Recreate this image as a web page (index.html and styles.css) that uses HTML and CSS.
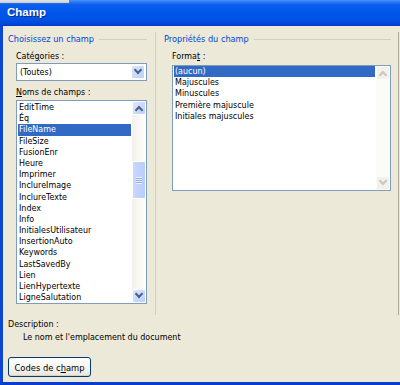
FILE: index.html
```html
<!DOCTYPE html>
<html lang="fr">
<head>
    <meta charset="UTF-8">
    <title>Champ</title>
    <link rel="stylesheet" href="styles.css">
</head>
<body>
    <div class="window">
        <div class="titlebar">Champ</div>
        <div class="frame">
            <div class="groups">
                <section class="group left">
                    <div class="group-title">Choisissez un champ</div>
                    <div class="label">Caté<u>g</u>ories :</div>
                    <div class="combo">
                        <span class="combo-text">(Toutes)</span>
                        <span class="sb-btn"><span class="arrow down"></span></span>
                    </div>
                    <div class="label"><u>N</u>oms de champs :</div>
                    <div class="listbox names">
                        <ul class="items">
                            <li>EditTime</li>
                            <li>Éq</li>
                            <li class="selected">FileName</li>
                            <li>FileSize</li>
                            <li>FusionEnr</li>
                            <li>Heure</li>
                            <li>Imprimer</li>
                            <li>InclureImage</li>
                            <li>InclureTexte</li>
                            <li>Index</li>
                            <li>Info</li>
                            <li>InitialesUtilisateur</li>
                            <li>InsertionAuto</li>
                            <li>Keywords</li>
                            <li>LastSavedBy</li>
                            <li>Lien</li>
                            <li>LienHypertexte</li>
                            <li>LigneSalutation</li>
                        </ul>
                        <div class="scrollbar">
                            <span class="sb-btn"><span class="arrow up"></span></span>
                            <div class="track">
                                <span class="thumb"><span class="grip"></span></span>
                            </div>
                            <span class="sb-btn"><span class="arrow down"></span></span>
                        </div>
                    </div>
                </section>
                <section class="group right">
                    <div class="group-title">Propriétés du champ</div>
                    <div class="label">Forma<u>t</u> :</div>
                    <div class="listbox formats">
                        <ul class="items">
                            <li class="selected">(aucun)</li>
                            <li>Majuscules</li>
                            <li>Minuscules</li>
                            <li>Première majuscule</li>
                            <li>Initiales majuscules</li>
                        </ul>
                        <div class="scrollbar disabled">
                            <span class="sb-btn"><span class="arrow up"></span></span>
                            <div class="track"></div>
                            <span class="sb-btn"><span class="arrow down"></span></span>
                        </div>
                    </div>
                </section>
            </div>
            <div class="description">
                <div class="desc-label">Description :</div>
                <div class="desc-text">Le nom et l'emplacement du document</div>
            </div>
            <button class="xp-button">Codes de c<u>h</u>amp</button>
        </div>
    </div>
</body>
</html>
```

FILE: styles.css
```css
body {
    margin: 0;
    background: #ece9d8;
    font-family: "DejaVu Sans Condensed", "DejaVu Sans", sans-serif;
    font-stretch: condensed;
    font-size: 8.9px;
    color: #000;
}
.window {
    width: 400px;
    height: 385px;
    display: flex;
    flex-direction: column;
    overflow: hidden;
}
.titlebar {
    position: relative;
    height: 26px;
    flex: none;
    box-sizing: border-box;
    padding: 6px 0 0 7px;
    background: linear-gradient(#4a95fa 0, #2a78f3 2px, #0b5eee 5px, #0057ea 12px, #0052e4 20px, #0046d6 24px, #0039c4 26px);
    color: #fff;
    font-family: "Liberation Sans", Arial, sans-serif;
    font-stretch: normal;
    font-weight: bold;
    font-size: 11.5px;
    text-shadow: 1px 1px 0 #0a2a8a;
}
/* bit of the window behind, showing over the top-left corner */
.titlebar::before {
    content: "";
    position: absolute;
    left: 0;
    top: 0;
    width: 69px;
    height: 3px;
    background: linear-gradient(#e4e3df, #c9ccd6);
}
.frame {
    flex: 1;
    display: flex;
    flex-direction: column;
    border-left: 3px solid #0a45d4;
    border-bottom: 3px solid #0a3ccd;
    background: #ece9d8;
}
.groups {
    display: flex;
    margin-top: 6px;
    height: 283px;
}
.group {
    display: flex;
    flex-direction: column;
    box-sizing: border-box;
}
.group.left {
    width: 153px;
    padding: 0 8px 0 13px;
    border-right: 1px solid #d0d0bf;
}
.group.right {
    flex: 1;
    padding: 0 7px 0 16px;
    border-right: 1px solid #aca899;
    margin-right: 1px;
}
.group-title {
    display: flex;
    align-items: center;
    height: 13px;
    margin-left: -8px;
    color: #0046d5;
    font-size: 9.1px;
    white-space: nowrap;
}
.group-title::after {
    content: "";
    flex: 1;
    height: 1px;
    background: #d0d0bf;
    margin: 2px 0 0 5px;
}
.label {
    height: 12px;
    line-height: 12px;
    margin-top: 5px;
}
.combo {
    display: flex;
    height: 18px;
    margin-top: 1px;
    box-sizing: border-box;
    border: 1px solid #7f9db9;
    background: #fff;
    padding: 1px;
}
.combo-text {
    flex: 1;
    padding-left: 2px;
    line-height: 14px;
}
.listbox {
    display: flex;
    box-sizing: border-box;
    border: 1px solid #7f9db9;
    background: #fff;
    margin-top: 2px;
}
.listbox.names {
    height: 204px;
}
.listbox.formats {
    height: 126px;
    margin-top: 3px;
}
.items {
    flex: 1;
    list-style: none;
    margin: 0;
    padding: 1px 1px 0;
    overflow: hidden;
    white-space: nowrap;
}
.formats .items {
    padding-top: 0;
}
.items li {
    height: 11.2px;
    line-height: 11.2px;
    padding-left: 1px;
}
.items li.selected {
    background: #316ac5;
    color: #fff;
}
.scrollbar {
    width: 14px;
    display: flex;
    flex-direction: column;
    background: linear-gradient(90deg, #f3f1ec, #fefefb);
}
.track {
    flex: 1;
    position: relative;
}
.sb-btn {
    display: flex;
    align-items: center;
    justify-content: center;
    width: 14px;
    height: 14px;
    flex: none;
    box-sizing: border-box;
    border: 1px solid #fff;
    border-radius: 2px;
    background: linear-gradient(135deg, #dbe6fd, #bccffb);
}
.arrow {
    width: 4px;
    height: 4px;
    border-right: 2px solid #4d6185;
    border-bottom: 2px solid #4d6185;
}
.arrow.down {
    transform: translateY(-2px) rotate(45deg);
}
.arrow.up {
    transform: translateY(2px) rotate(-135deg);
}
.thumb {
    position: absolute;
    left: 0;
    right: 0;
    top: 46px;
    height: 38px;
    box-sizing: border-box;
    border: 1px solid #fff;
    border-radius: 2px;
    background: linear-gradient(90deg, #c9d8fc, #b8cdfa);
    display: flex;
    align-items: center;
    justify-content: center;
}
.grip {
    width: 6px;
    height: 7px;
    background: repeating-linear-gradient(#eef4fe 0 1px, #8caaf0 1px 2px);
}
.scrollbar.disabled {
    background: #fbfbf8;
}
.scrollbar.disabled .sb-btn {
    background: #f2f1ea;
    border-color: #fbfbf8;
}
.scrollbar.disabled .arrow {
    border-color: #c9c7ba;
}
.description {
    margin-top: 3px;
    padding-left: 5px;
    line-height: 13px;
}
.desc-text {
    padding-left: 15px;
}
.xp-button {
    align-self: flex-start;
    margin: 13px 0 0 5px;
    width: 83px;
    height: 20px;
    padding: 0;
    border: 1px solid #003c74;
    border-radius: 3px;
    background: linear-gradient(#ffffff, #f4f3ee 60%, #e6e4da);
    box-shadow: inset 0 -1px 0 #d6d0c5;
    font-family: inherit;
    font-stretch: condensed;
    font-size: 9.3px;
    color: #000;
}
```
